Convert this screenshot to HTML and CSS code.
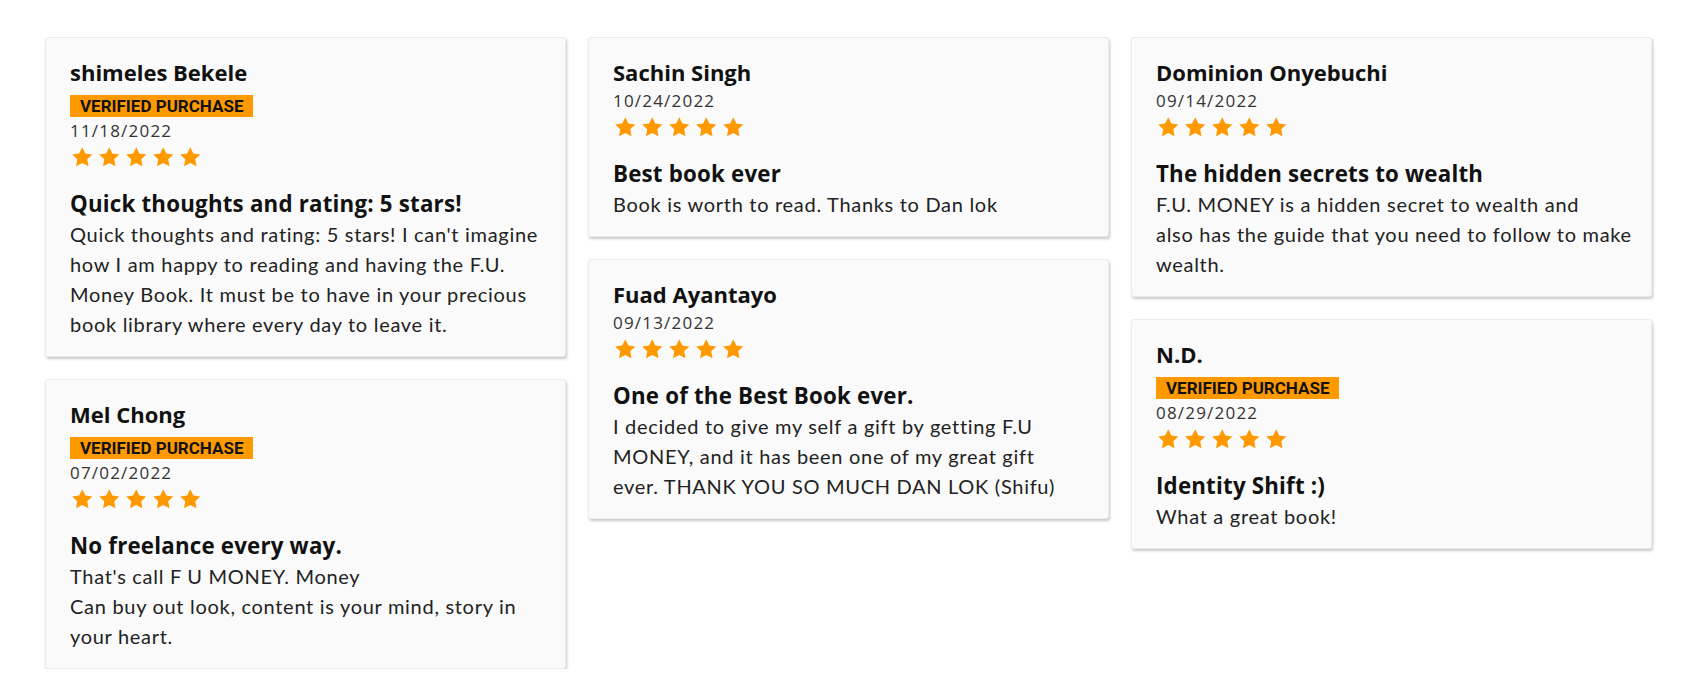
FILE: index.html
```html
<!DOCTYPE html>
<html lang="en">
  <head>
    <meta charset="UTF-8" />
    <meta name="viewport" content="width=device-width, initial-scale=1.0" />
    <title>Reviews</title>
    <link rel="stylesheet" href="styles.css">
  </head>
  <body>
    <svg width="0" height="0" class="defs">
      <symbol id="star" viewBox="0 0 24 24">
        <path d="M12 1.2l3.2 6.6 7.3 1-5.3 5.1 1.3 7.2L12 17.7l-6.5 3.4 1.3-7.2-5.3-5.1 7.3-1z" />
      </symbol>
    </svg>

    <div class="review-grid">
      <div class="review-column">
        <div class="review-card">
          <p class="review-name">shimeles Bekele</p>
          <span class="review-badge">VERIFIED PURCHASE</span>
          <p class="review-date">11/18/2022</p>
          <div class="review-stars">
            <svg><use href="#star" /></svg><svg><use href="#star" /></svg><svg><use href="#star" /></svg><svg><use href="#star" /></svg><svg><use href="#star" /></svg>
          </div>
          <p class="review-title">Quick thoughts and rating: 5 stars!</p>
          <p class="review-body">Quick thoughts and rating: 5 stars! I can't imagine how I am happy to reading and having the F.U. Money Book. It must be to have in your precious book library where every day to leave it.</p>
        </div>

        <div class="review-card">
          <p class="review-name">Mel Chong</p>
          <span class="review-badge">VERIFIED PURCHASE</span>
          <p class="review-date">07/02/2022</p>
          <div class="review-stars">
            <svg><use href="#star" /></svg><svg><use href="#star" /></svg><svg><use href="#star" /></svg><svg><use href="#star" /></svg><svg><use href="#star" /></svg>
          </div>
          <p class="review-title">No freelance every way.</p>
          <p class="review-body">That's call F U MONEY. Money
Can buy out look, content is your mind, story in your heart.</p>
        </div>
      </div>

      <div class="review-column">
        <div class="review-card">
          <p class="review-name">Sachin Singh</p>
          <p class="review-date">10/24/2022</p>
          <div class="review-stars">
            <svg><use href="#star" /></svg><svg><use href="#star" /></svg><svg><use href="#star" /></svg><svg><use href="#star" /></svg><svg><use href="#star" /></svg>
          </div>
          <p class="review-title">Best book ever</p>
          <p class="review-body">Book is worth to read. Thanks to Dan lok</p>
        </div>

        <div class="review-card">
          <p class="review-name">Fuad Ayantayo</p>
          <p class="review-date">09/13/2022</p>
          <div class="review-stars">
            <svg><use href="#star" /></svg><svg><use href="#star" /></svg><svg><use href="#star" /></svg><svg><use href="#star" /></svg><svg><use href="#star" /></svg>
          </div>
          <p class="review-title">One of the Best Book ever.</p>
          <p class="review-body">I decided to give my self a gift by getting F.U MONEY, and it has been one of my great gift
ever. THANK YOU SO MUCH DAN LOK (Shifu)</p>
        </div>
      </div>

      <div class="review-column">
        <div class="review-card">
          <p class="review-name">Dominion Onyebuchi</p>
          <p class="review-date">09/14/2022</p>
          <div class="review-stars">
            <svg><use href="#star" /></svg><svg><use href="#star" /></svg><svg><use href="#star" /></svg><svg><use href="#star" /></svg><svg><use href="#star" /></svg>
          </div>
          <p class="review-title">The hidden secrets to wealth</p>
          <p class="review-body">F.U. MONEY is a hidden secret to wealth and
also has the guide that you need to follow to make wealth.</p>
        </div>

        <div class="review-card">
          <p class="review-name">N.D.</p>
          <span class="review-badge">VERIFIED PURCHASE</span>
          <p class="review-date">08/29/2022</p>
          <div class="review-stars">
            <svg><use href="#star" /></svg><svg><use href="#star" /></svg><svg><use href="#star" /></svg><svg><use href="#star" /></svg><svg><use href="#star" /></svg>
          </div>
          <p class="review-title">Identity Shift :)</p>
          <p class="review-body">What a great book!</p>
        </div>
      </div>
    </div>
  </body>
</html>
```

FILE: styles.css
```css
body {
  margin: 0;
  font-family: "Open Sans", Lato, sans-serif;
  background: white;
  color: #111;
}

.defs {
  position: absolute;
}

.review-grid {
  display: flex;
  gap: 22px;
  padding: 37px 0 0 45px;
  align-items: flex-start;
}

.review-column {
  display: flex;
  flex-direction: column;
  gap: 22px;
  width: 521px;
}

.review-card {
  display: flex;
  flex-direction: column;
  align-items: flex-start;
  background: #fafafa;
  border: 1px solid #ececec;
  border-radius: 3px;
  padding: 19px 16px 17px 24px;
  box-shadow: 1px 2px 3px rgba(0, 0, 0, 0.22);
}

.review-name {
  font-size: 22px;
  font-weight: 700;
  line-height: 30px;
  margin: 0;
}

.review-badge {
  margin-top: 8px;
  background: #ff9900;
  color: #111;
  font-family: "Liberation Sans Narrow", Roboto, sans-serif;
  font-weight: 700;
  font-size: 17px;
  line-height: 22px;
  padding: 0 10px;
}

.review-date {
  font-size: 17px;
  line-height: 27px;
  letter-spacing: 1.2px;
  color: #333;
  margin: 0;
}

.review-stars {
  display: flex;
  gap: 2.5px;
  margin-top: 2px;
}

.review-stars svg {
  width: 24.5px;
  height: 23px;
  fill: #ff9900;
}

.review-title {
  font-size: 22.3px;
  font-weight: 700;
  line-height: 30px;
  letter-spacing: 0.2px;
  margin: 20px 0 0;
}

.review-body {
  font-family: Lato, "Open Sans", sans-serif;
  font-size: 20px;
  line-height: 30px;
  letter-spacing: 0.7px;
  color: #222;
  margin: 0;
  white-space: pre-line;
}
```
